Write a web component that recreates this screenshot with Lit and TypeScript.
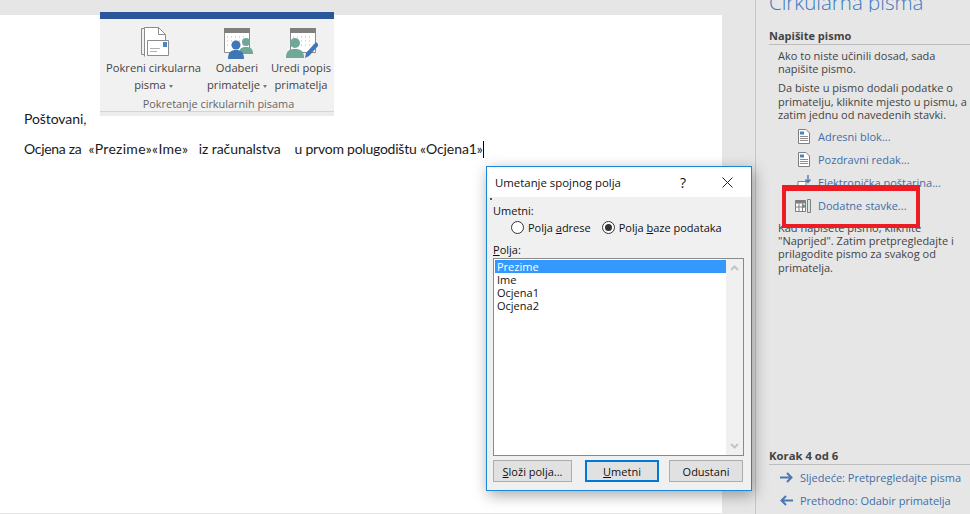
import { LitElement, html, css, svg } from "lit";
import { customElement } from "lit/decorators.js";

const docIcon = svg`<svg class="ico" width="14" height="17" viewBox="0 0 14 17"><path d="M1.500 1.500h7.500l3.500 3.500v10.500h-11z" fill="#fff" stroke="#7f7f7f"/><path d="M3 3.500h4v3h-4z" fill="#4f81bd"/><path d="M3 8.500h8M3 10.500h8M3 12.500h8" stroke="#8c8c8c"/></svg>`;
const arrow = (left: boolean) => svg`<svg width="13" height="11" viewBox="0 0 13 11" class=${left ? "flip" : ""}><path d="M0 5.500h11M7 1l4.500 4.500L7 10" fill="none" stroke="#4a78b0" stroke-width="2"/></svg>`;

@customElement("app-root")
export class AppRoot extends LitElement {
  static styles = css`
    :host { display: block; width: 970px; height: 514px; overflow: hidden; position: relative; background: #e6e6e6; font-family: "Open Sans", "Noto Sans", sans-serif; }
    .flip { transform: scaleX(-1); }
    .root { display: flex; height: 514px; }
    .docarea { width: 756px; box-sizing: border-box; padding: 15px 33px 1px 0; border-right: 1px solid #c6c6c6; flex: none; }
    .page { background: #fff; height: 100%; box-sizing: border-box; padding: 94px 0 0 24px; font-family: Lato, "Liberation Sans", sans-serif; font-size: 14px; color: #1a1a1a; }
    .page p { margin: 0 0 11px; line-height: 19px; white-space: pre; letter-spacing: -0.08px; }
    .tight { letter-spacing: -0.3px; }
    .fields { letter-spacing: 0.28px; }
    .mid { letter-spacing: -0.24px; }
    .caret { display: inline-block; width: 1px; height: 17px; background: #000; vertical-align: -4px; }

    .ribbon { position: absolute; left: 100px; top: 12px; width: 234px; height: 104px; background: #ececec; font-size: 11.2px; color: #444; }
    .ribbon .blue { height: 7px; background: #2b579a; }
    .ribbon .body { height: 92px; background: #f1f1f1; border-bottom: 1px solid #d4d4d4; display: flex; flex-direction: column; align-items: stretch; }
    .tools { display: flex; height: 77px; padding: 8px 0 0 1px; box-sizing: border-box; }
    .tool { display: flex; flex-direction: column; align-items: center; text-align: center; line-height: 17px; white-space: nowrap; }
    .tool svg.big { height: 32px; display: block; }
    .t1 { width: 105px; } .t2 { width: 62px; } .t3 { width: 66px; }
    .t2 svg.big { margin-left: 2px; }
    .tri { display: inline-block; width: 0; height: 0; border: 2.5px solid transparent; border-top: 3px solid #777; margin-left: 3px; vertical-align: -1px; }
    .grouplabel { text-align: center; font-size: 10.9px; color: #666; line-height: 15px; padding-left: 3px; }

    .pane { flex: 1; padding-left: 13px; color: #444; font-size: 11px; line-height: 13.2px; display: flex; flex-direction: column; overflow: hidden; min-width: 0; }
    .title { height: 12px; overflow: hidden; display: flex; align-items: flex-end; color: #3a78c0; font-size: 20.5px; line-height: 24px; margin-bottom: 17px; font-weight: 300; white-space: nowrap; flex: none; }
    .title span { display: block; margin-bottom: -2px; }
    .h { font-weight: 700; font-size: 11px; color: #444; line-height: 14px; border-bottom: 1px solid #bdbdbd; padding-bottom: 1px; }
    .txt { padding-left: 9px; white-space: nowrap; }
    .txt p { margin: 0; }
    .txt p.a { margin-top: 4px; }
    .txt p.b { margin-top: 6px; }
    .links { display: flex; flex-direction: column; padding-left: 28px; margin-top: 4px; }
    .link { display: flex; align-items: center; height: 23px; gap: 7px; color: #3f6ea8; white-space: nowrap; }
    .ico { flex: none; width: 14px; display: block; }
    .ico.wide { width: 16px; margin-left: -2px; }
    .after { margin-top: 4px; }
    .foot { margin-top: auto; padding-bottom: 2px; }
    .foot .h { margin-bottom: 1px; font-size: 11.3px; }
    .nav { display: flex; align-items: center; height: 23px; padding-left: 11px; gap: 7px; color: #3f6ea8; white-space: nowrap; }

    .red { position: absolute; left: 782px; top: 185px; width: 138px; height: 43px; box-sizing: border-box; border: solid #ed1c24; border-width: 6px 4px 4px 4px; }

    .dlg { position: absolute; left: 486px; top: 166px; width: 266px; height: 325px; box-sizing: border-box; border: 1px solid #1b86d8; background: #f0f0f0; box-shadow: 2px 4px 14px rgba(0,0,0,.35); color: #111; font-size: 11px; display: flex; flex-direction: column; }
    .tbar { height: 30px; background: #fff; display: flex; align-items: center; padding-left: 8px; font-size: 11.4px; color: #111; flex: none; }
    .tbar .tt { flex: 1; }
    .tbar .q { width: 42px; font-size: 14px; text-align: left; }
    .tbar svg { margin-right: 18px; }
    .dbody { padding: 7px 6px 0 6px; flex: 1; display: flex; flex-direction: column; position: relative; }
    .dot { position: absolute; left: 3px; top: 1px; width: 2px; height: 2px; background: #555; }
    .lbl { line-height: 14px; }
    .radios { display: flex; align-items: center; height: 18px; padding-left: 18px; }
    .radio { display: flex; align-items: center; gap: 4px; white-space: nowrap; }
    .radio + .radio { margin-left: 11px; }
    .rc { width: 13px; height: 13px; box-sizing: border-box; border: 1px solid #333; border-radius: 50%; background: #fff; display: flex; align-items: center; justify-content: center; }
    .rc i { display: block; width: 7px; height: 7px; border-radius: 50%; background: #333; }
    u { text-decoration: underline; text-underline-offset: 1px; }
    .pl { margin-top: 7px; margin-bottom: 1px; }
    .list { height: 198px; width: 251px; box-sizing: border-box; border: 1px solid #8a8a8a; background: #fff; display: flex; padding: 1px 0 0 1px; flex: none; }
    .rows { flex: 1; line-height: 13px; }
    .row { height: 13px; padding-left: 2px; }
    .row.sel { background: #3399ff; color: #fff; outline: 1px dotted #a08040; outline-offset: -1px; }
    .sb { width: 17px; margin-top: -1px; background: #f0f0f0; display: flex; flex-direction: column; justify-content: space-between; align-items: center; padding: 6px 0; box-sizing: border-box; }
    .btns { display: flex; margin-top: 4px; width: 250px; }
    .btn { height: 22px; box-sizing: border-box; border: 1px solid #adadad; background: #e1e1e1; display: flex; align-items: center; justify-content: center; width: 79px; }
    .btn.def { width: 74px; border: 2px solid #0078d7; margin-left: 13px; }
    .btn.odu { width: 74px; margin-left: 10px; }
  `;

  render() {
    return html`
      <div class="root">
        <div class="docarea">
          <div class="page">
            <p>Poštovani,</p>
            <p><span class="tight">Ocjena za</span>  <span class="fields">«Prezime»«Ime»</span>   iz računalstva    <span class="mid">u prvom polugodištu</span> «Ocjena1»<span class="caret"></span></p>
          </div>
        </div>
        <div class="pane">
          <div class="title"><span>Cirkularna pisma</span></div>
          <div class="h">Napišite pismo</div>
          <div class="txt">
            <p class="a">Ako to niste učinili dosad, sada<br>napišite pismo.</p>
            <p class="b">Da biste u pismo dodali podatke o<br>primatelju, kliknite mjesto u pismu, a<br>zatim jednu od navedenih stavki.</p>
          </div>
          <div class="links">
            <div class="link">${docIcon}Adresni blok...</div>
            <div class="link">${docIcon}Pozdravni redak...</div>
            <div class="link">
              <svg class="ico" width="14" height="16" viewBox="0 0 14 16"><path d="M1 6.500h8v8h-8z" fill="#fff" stroke="#7f7f7f"/><path d="M11 0v7M8.500 4.500l2.500 3 2.500-3" fill="none" stroke="#4a78b0" stroke-width="1.400"/></svg>
              Elektronička poštarina...
            </div>
            <div class="link">
              <svg class="ico wide" width="16" height="14" viewBox="0 0 16 14"><path d="M.5 1.500h10v11H.5z" fill="#fff" stroke="#7f7f7f"/><path d="M.5 1.500h10v3H.5z" fill="#7f7f7f"/><path d="M.5 8h10M4 4.500v8M7.500 4.500v8" stroke="#7f7f7f"/><path d="M12.500.5h3v13h-3z" fill="#d9e4f1" stroke="#7f7f7f"/><path d="M11 7l-3 2V5z" fill="#4aa07f"/></svg>
              Dodatne stavke...
            </div>
          </div>
          <div class="txt after">
            <p>Kad napišete pismo, kliknite<br>"Naprijed". Zatim pretpregledajte i<br>prilagodite pismo za svakog od<br>primatelja.</p>
          </div>
          <div class="foot">
            <div class="h">Korak 4 od 6</div>
            <div class="nav">${arrow(false)}Sljedeće: Pretpregledajte pisma</div>
            <div class="nav">${arrow(true)}Prethodno: Odabir primatelja</div>
          </div>
        </div>
      </div>

      <div class="ribbon">
        <div class="blue"></div>
        <div class="body">
          <div class="tools">
            <div class="tool t1">
              <svg class="big" width="32" height="32" viewBox="0 0 32 32" fill="none"><path d="M3.500 1.500v26M3.500 1.500h3M3.500 27.500h3" stroke="#8c8c8c"/><path d="M6.500 29.500V.5h14l7 7v6" stroke="#8c8c8c" fill="#fff"/><path d="M20.500.5v7h7" stroke="#8c8c8c"/><path d="M9.500 13.500h21v15h-21z" fill="#fff" stroke="#8c8c8c"/><path d="M12 21.500h10M12 24.500h7" stroke="#b0b0b0"/><path d="M25 15h4v5h-4z" fill="#4a86c5"/></svg>
              <span>Pokreni cirkularna</span><span>pisma<i class="tri"></i></span>
            </div>
            <div class="tool t2">
              <svg class="big" width="32" height="32" viewBox="0 0 32 32"><path d="M2.500 1.500h25v24h-25z" fill="#fff" stroke="#8c8c8c"/><path d="M2 1h26v5H2z" fill="#7f7f7f"/><path d="M5 10h20M5 14h20M5 18h20" stroke="#b5b5b5" stroke-dasharray="1 3"/><circle cx="24" cy="15" r="4" fill="#6fa898"/><path d="M17 27c0-6 3-7 7-7s7 1 7 7z" fill="#6fa898"/><circle cx="14" cy="18" r="4.500" fill="#3f76b5"/><path d="M6 32c0-7 3-9 8-9s8 2 8 9z" fill="#3f76b5"/></svg>
              <span>Odaberi</span><span>primatelje<i class="tri"></i></span>
            </div>
            <div class="tool t3">
              <svg class="big" width="34" height="32" viewBox="0 0 34 32"><path d="M6.500 1.500h25v24h-25z" fill="#fff" stroke="#8c8c8c"/><path d="M6 1h26v5H6z" fill="#7f7f7f"/><path d="M9 10h20M9 14h20M9 18h20" stroke="#b5b5b5" stroke-dasharray="1 3"/><circle cx="11" cy="16" r="5" fill="#6fa898"/><path d="M2 31c0-7 3-9 9-9s9 2 9 9z" fill="#6fa898"/><path d="M21 31l1-5 10-11 3 3-10 11z" fill="#3f76b5"/></svg>
              <span>Uredi popis</span><span>primatelja</span>
            </div>
          </div>
          <div class="grouplabel">Pokretanje cirkularnih pisama</div>
        </div>
      </div>

      <div class="red"></div>

      <div class="dlg">
        <div class="tbar">
          <span class="tt">Umetanje spojnog polja</span>
          <span class="q">?</span>
          <svg width="11" height="11" viewBox="0 0 11 11"><path d="M.5.500l10 10M10.500.500l-10 10" stroke="#222" fill="none"/></svg>
        </div>
        <div class="dbody">
          <i class="dot"></i>
          <div class="lbl">Umetni:</div>
          <div class="radios">
            <div class="radio"><span class="rc"></span><span>Polja <u>a</u>drese</span></div>
            <div class="radio"><span class="rc"><i></i></span><span>Polja <u>b</u>aze podataka</span></div>
          </div>
          <div class="lbl pl"><u>P</u>olja:</div>
          <div class="list">
            <div class="rows">
              <div class="row sel">Prezime</div>
              <div class="row">Ime</div>
              <div class="row">Ocjena1</div>
              <div class="row">Ocjena2</div>
            </div>
            <div class="sb">
              <svg width="9" height="6" viewBox="0 0 9 6"><path d="M1 5l3.500-3.500L8 5" fill="none" stroke="#c4c4c4" stroke-width="2"/></svg>
              <svg width="9" height="6" viewBox="0 0 9 6"><path d="M1 1l3.500 3.500L8 1" fill="none" stroke="#c4c4c4" stroke-width="2"/></svg>
            </div>
          </div>
          <div class="btns">
            <div class="btn"><span><u>S</u>loži polja...</span></div>
            <div class="btn def"><span><u>U</u>metni</span></div>
            <div class="btn odu">Odustani</div>
          </div>
        </div>
      </div>
    `;
  }
}
